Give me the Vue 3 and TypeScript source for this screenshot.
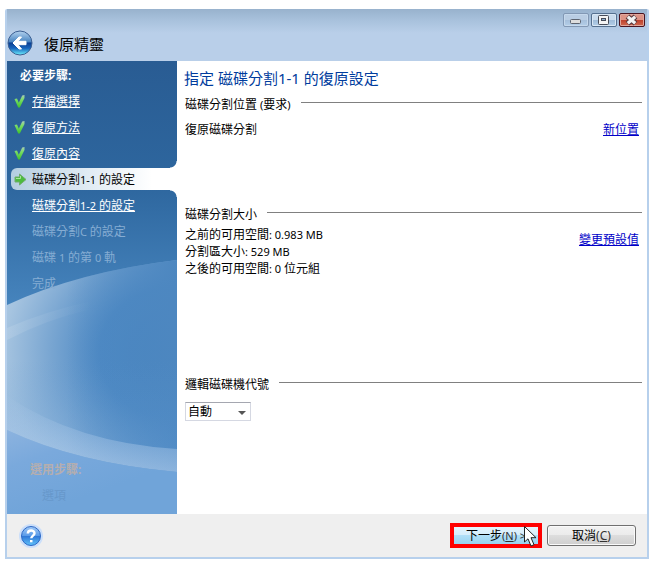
<script setup lang="ts">
import { ref } from 'vue'

type StepState = 'done' | 'active' | 'open' | 'pending'
interface Part { text: string; latin?: boolean }
interface Step { label: string; state: StepState }

const steps: Step[] = [
  { label: '存檔選擇', state: 'done' },
  { label: '復原方法', state: 'done' },
  { label: '復原內容', state: 'done' },
  { label: '磁碟分割1-1 的設定', state: 'active' },
  { label: '磁碟分割1-2 的設定', state: 'open' },
  { label: '磁碟分割C 的設定', state: 'pending' },
  { label: '磁碟 1 的第 0 軌', state: 'pending' },
  { label: '完成', state: 'pending' },
]
const sizes = ['之前的可用空間: 0.983 MB', '分割區大小: 529 MB', '之後的可用空間: 0 位元組']
const letter = ref('自動')

const isLink = (state: StepState) => state === 'done' || state === 'open'

/* Splits a label into CJK and Latin runs so each gets its own type size. */
function parts(label: string): Part[] {
  return (label.match(/[\x20-\x7e]+|[^\x20-\x7e]+/g) ?? []).map((text) => ({
    text,
    latin: /^[\x20-\x7e]/.test(text),
  }))
}
</script>

<template>
  <div class="desktop">
    <div class="window">
      <header class="header">
        <div class="brand">
          <button class="back" type="button" aria-label="返回">
            <svg viewBox="0 0 26 26" width="26" height="26">
              <defs>
                <linearGradient id="backFill" x1="0" y1="0" x2="0" y2="1">
                  <stop offset="0" stop-color="#b4d2ee" />
                  <stop offset=".45" stop-color="#4a86c2" />
                  <stop offset=".5" stop-color="#0b3f92" />
                  <stop offset=".72" stop-color="#1766bd" />
                  <stop offset="1" stop-color="#6ff2ff" />
                </linearGradient>
              </defs>
              <circle cx="13" cy="13" r="12" fill="url(#backFill)" stroke="#3c5f92" />
              <path d="M6 13 L12 7 H14.500 L11 11.300 H19 V14.700 H11 L14.500 19 H12 Z" fill="#fff" stroke="#fff" stroke-linejoin="round" />
            </svg>
          </button>
          <h1>復原精靈</h1>
        </div>
        <div class="controls">
          <button class="control dim" type="button" aria-label="最小化">
            <svg viewBox="0 0 24 12" width="24" height="12"><rect x="6.500" y="5.500" width="10" height="4" rx="1" fill="#ddd" stroke="#5d6470" /></svg>
          </button>
          <button class="control" type="button" aria-label="最大化">
            <svg viewBox="0 0 24 12" width="24" height="12">
              <rect x="6.500" y="1.500" width="10" height="9" rx="1" fill="#f4f4f4" stroke="#474c58" />
              <rect x="9.500" y="4.500" width="4" height="2" fill="#8fb0d2" stroke="#474c58" />
            </svg>
          </button>
          <button class="control close" type="button" aria-label="關閉">
            <svg viewBox="0 0 24 12" width="24" height="12">
              <path d="M7.500 2.500 L15.500 9.500 M15.500 2.500 L7.500 9.500" stroke="#54383d" stroke-width="5.500" />
              <path d="M7.800 2.800 L15.200 9.200 M15.200 2.800 L7.800 9.200" stroke="#f3f3f3" stroke-width="3.200" />
            </svg>
          </button>
        </div>
      </header>

      <div class="body">
        <nav class="sidebar">
          <svg class="art" viewBox="0 0 170 453" preserveAspectRatio="none" aria-hidden="true">
            <defs>
              <linearGradient id="base" x1="0" y1="0" x2="0" y2="1">
                <stop offset="0" stop-color="#295c93" />
                <stop offset=".28" stop-color="#2e679f" />
                <stop offset=".54" stop-color="#4684bd" />
              </linearGradient>
              <radialGradient id="wave" gradientUnits="userSpaceOnUse" cx="0" cy="0" r="1" gradientTransform="translate(168 292) scale(190 165)">
                <stop offset="0" stop-color="#4583bf" />
                <stop offset=".4" stop-color="#4d89c4" />
                <stop offset=".65" stop-color="#78a5d1" />
                <stop offset=".9" stop-color="#a6c4e0" />
                <stop offset="1" stop-color="#b0cae4" />
              </radialGradient>
              <linearGradient id="shade" x1="0" y1="0" x2="1" y2="0">
                <stop offset=".35" stop-color="#4d87c0" stop-opacity="0" />
                <stop offset="1" stop-color="#4d87c0" />
              </linearGradient>
              <linearGradient id="glow" x1="0" y1="0" x2="0" y2="1">
                <stop offset="0" stop-color="#5590cb" stop-opacity="0" />
                <stop offset="1" stop-color="#5f9ad5" stop-opacity=".6" />
              </linearGradient>
              <linearGradient id="band" x1=".5" y1="0" x2=".38" y2="1">
                <stop offset="0" stop-color="#b9d2ee" stop-opacity="0" />
                <stop offset="1" stop-color="#b9d2ee" stop-opacity=".6" />
              </linearGradient>
              <linearGradient id="ray" x1="0" y1="0" x2="1" y2="0">
                <stop offset="0" stop-color="#fff" stop-opacity=".12" />
                <stop offset="1" stop-color="#fff" stop-opacity="0" />
              </linearGradient>
              <linearGradient id="floor" gradientUnits="userSpaceOnUse" x1="0" y1="369" x2="30" y2="453">
                <stop offset="0" stop-color="#8cb3df" />
                <stop offset=".4" stop-color="#7aa9dc" />
                <stop offset="1" stop-color="#70a4d9" />
              </linearGradient>
            </defs>
            <rect width="170" height="453" fill="url(#base)" />
            <path d="M0 244 Q70 211 170 199 V453 H0 Z" fill="url(#wave)" />
            <path d="M0 244 Q70 211 170 199 V411 Q70 402 0 369 Z" fill="url(#shade)" />
            <path d="M0 267 Q36 251 85 240 V248 Q40 258 0 279 Z" fill="url(#ray)" />
            <rect y="300" width="170" height="153" fill="url(#glow)" />
            <path d="M0 335 Q70 382 170 388 V411 Q70 402 0 369 Z" fill="url(#band)" />
            <path d="M0 369 Q70 402 170 411 V453 H0 Z" fill="url(#floor)" />
          </svg>
          <h2>必要步驟:</h2>
          <ol class="steps">
            <li v-for="step in steps" :key="step.label" :class="step.state">
              <span class="mark">
                <svg v-if="step.state === 'done'" viewBox="0 0 11 13" width="11" height="13">
                  <path d="M0.5 4 L3 3.500 L4.800 7.800 L8.200 .5 L10.500 0 V3 L5.800 12.500 H4.200 Z" fill="url(#tick)" />
                  <defs>
                    <linearGradient id="tick" x1="0" y1="0" x2="0" y2="1">
                      <stop offset="0" stop-color="#a9cbb8" />
                      <stop offset=".4" stop-color="#77dd62" />
                      <stop offset="1" stop-color="#3fc22d" />
                    </linearGradient>
                  </defs>
                </svg>
                <svg v-if="step.state === 'active'" viewBox="0 0 13 13" width="13" height="13">
                  <path d="M1 4 H5.500 V1 L12 6.500 L5.500 12 V9 H1 Z" fill="#4dbb3e" stroke="#70ad6d" stroke-linejoin="round" />
                  <path d="M2 5.500 H6.500 V3" fill="none" stroke="#a8e898" />
                </svg>
              </span>
              <component :is="isLink(step.state) ? 'a' : 'span'" class="label" :href="isLink(step.state) ? '#' : undefined"><span v-for="(part, i) in parts(step.label)" :key="i" :class="{ latin: part.latin }">{{ part.text }}</span></component>
            </li>
          </ol>
          <div class="optional">
            <h2>選用步驟:</h2>
            <span>選項</span>
          </div>
        </nav>

        <main class="main">
          <h2 class="title">指定 磁碟分割<span class="latin">1-1 </span>的復原設定</h2>
          <section>
            <h3><span>磁碟分割位置<span class="latin"> (</span>要求<span class="latin">)</span></span></h3>
            <div class="row">
              <span>復原磁碟分割</span>
              <a href="#">新位置</a>
            </div>
          </section>
          <section class="size">
            <h3><span>磁碟分割大小</span></h3>
            <div class="row">
              <ul>
                <li v-for="line in sizes" :key="line"><span v-for="(part, i) in parts(line)" :key="i" :class="{ latin: part.latin }">{{ part.text }}</span></li>
              </ul>
              <a href="#">變更預設值</a>
            </div>
          </section>
          <section>
            <h3><label for="letter">邏輯磁碟機代號</label></h3>
            <div class="picker">
              <select id="letter" v-model="letter">
                <option>自動</option>
              </select>
              <svg viewBox="0 0 8 4" width="8" height="4" aria-hidden="true"><path d="M0 0 H8 L4 4 Z" fill="#555" /></svg>
            </div>
          </section>
        </main>
      </div>

      <footer class="footer">
        <button class="help" type="button" aria-label="說明">
          <svg viewBox="0 0 24 24" width="24" height="24">
            <defs>
              <linearGradient id="helpFill" x1="0" y1="0" x2="0" y2="1">
                <stop offset="0" stop-color="#a5ccf7" />
                <stop offset=".5" stop-color="#5799e8" />
                <stop offset=".52" stop-color="#3079d8" />
                <stop offset="1" stop-color="#60c3fa" />
              </linearGradient>
            </defs>
            <circle cx="12" cy="12" r="12" fill="#cbdffa" />
            <circle cx="12" cy="12" r="9.500" fill="url(#helpFill)" stroke="#2d69c7" />
            <path d="M8.800 9.500 C8.800 5.500 15.500 5.500 15.500 9.300 C15.500 11.600 12.300 11.600 12.300 14.300" fill="none" stroke="#fff" stroke-width="2.400" />
            <rect x="11" y="16" width="2.500" height="2.300" fill="#fff" />
          </svg>
        </button>
        <div class="actions">
          <div class="focus">
            <button class="forward" type="button">下一步<span class="key">(<u>N</u>) &gt;</span></button>
            <svg class="cursor" viewBox="0 0 13 21" width="13" height="21" aria-hidden="true">
              <path d="M.5 .5 V16 L4 12.800 L7 20 L10 18.700 L7 11.700 H12 Z" fill="#fff" stroke="#222" />
            </svg>
          </div>
          <button class="cancel" type="button">取消<span class="key">(<u>C</u>)</span></button>
        </div>
      </footer>
    </div>
  </div>
</template>

<style>
body {
  margin: 0;
  background: #fff;
}
</style>

<style scoped>
* {
  box-sizing: border-box;
}
.desktop {
  display: flex;
  min-height: 100vh;
  padding: 9px 12px 7px 5px;
  font-family: "Noto Sans", "Noto Sans CJK TC", sans-serif;
  font-size: 12px;
  line-height: 18px;
  color: #000;
}
h1, h2, h3, ul, ol {
  margin: 0;
  padding: 0;
  list-style: none;
  font-size: inherit;
  font-weight: normal;
}
button {
  font: inherit;
  color: inherit;
  padding: 0;
}
.latin {
  font-size: 11px;
  white-space: pre;
}
.window {
  flex: 1;
  display: flex;
  flex-direction: column;
  border: 2px solid #b7d0ec;
  border-top: 0;
  border-radius: 2px 2px 0 0;
  background: #fff;
  overflow: hidden;
}
.header {
  display: flex;
  justify-content: space-between;
  align-items: flex-start;
  height: 52px;
  padding: 4px 2px 0 0;
  background: linear-gradient(#98b2cd, #a9c2dd 12px, #b9cfe9 24px);
}
.brand {
  display: flex;
  align-items: center;
  gap: 11px;
  padding-top: 17px;
}
h1 {
  padding-top: 2px;
  font-size: 15px;
  line-height: 24px;
}
.back, .help {
  display: flex;
  border: 0;
  background: none;
}
.controls {
  display: flex;
  gap: 2px;
}
.control {
  display: flex;
  width: 26px;
  height: 14px;
  border: 1px solid #55708f;
  border-radius: 2px;
  box-shadow: inset 0 0 0 1px #d9e7f5;
  background: linear-gradient(#c9dbed 50%, #9fbbd8 50%, #b4cfe9);
}
.control.dim {
  border-color: #8298b4;
  box-shadow: inset 0 0 0 1px #c5d8ec;
  background: linear-gradient(#b9cde3 50%, #a6bfdb 50%, #b4cfe9);
}
.control.close {
  border-color: #4a1420;
  box-shadow: inset 0 0 0 1px #e0a79d;
  background: linear-gradient(#dc9386 50%, #bd3f2b 50%, #d06a50);
}
.body {
  flex: 1;
  display: grid;
  grid-template-columns: 170px 1fr;
}
.sidebar {
  position: relative;
  display: flex;
  flex-direction: column;
  padding-top: 6px;
  color: #fff;
}
.art {
  position: absolute;
  inset: 0;
  width: 100%;
  height: 100%;
}
.sidebar h2 {
  position: relative;
  padding-left: 13px;
  font-weight: bold;
}
.steps {
  position: relative;
  padding: 5px 0 0 4px;
}
.steps li {
  position: relative;
  display: flex;
  align-items: center;
  height: 22px;
  margin-bottom: 4px;
}
.mark {
  display: flex;
  width: 21px;
  padding-left: 3px;
}
.label {
  padding-top: 2px;
}
.steps a {
  color: #fff;
}
.steps .pending {
  color: #86add3;
}
.steps .active {
  color: #000;
  border-radius: 6px 0 0 6px;
  background: linear-gradient(90deg, #b4cde0, #dfeaf3 45%, #fff 85%);
}
.active::before, .active::after {
  content: "";
  position: absolute;
  right: 0;
  width: 7px;
  height: 7px;
}
.active::before {
  bottom: 100%;
  background: radial-gradient(circle at 0 0, transparent 6px, #fff 7px);
}
.active::after {
  top: 100%;
  background: radial-gradient(circle at 0 100%, transparent 6px, #fff 7px);
}
.optional {
  position: relative;
  display: flex;
  flex-direction: column;
  gap: 8px;
  margin-top: auto;
  padding: 0 0 9px 10px;
  color: #b5aeaf;
}
.optional span {
  padding-left: 25px;
  color: #6798cb;
}
.main {
  display: grid;
  grid-template-rows: 35px 110px 170px auto;
  align-content: start;
  padding: 0 5px 0 7px;
}
.title {
  padding-top: 8px;
  font-size: 15px;
  color: #003c9d;
}
section {
  padding-left: 1px;
}
h3 {
  display: flex;
  align-items: center;
  gap: 10px;
}
h3::after {
  content: "";
  flex: 1;
  height: 1px;
  margin-bottom: 5px;
  background: #808080;
}
.title .latin {
  font-size: 15px;
}
.row {
  display: flex;
  justify-content: space-between;
  align-items: flex-start;
  padding: 7px 3px 0 0;
}
.size .row {
  padding-top: 2px;
}
.size li {
  line-height: 17px;
}
.size a {
  padding-top: 5px;
}
.main a {
  color: #0000c8;
}
.picker {
  position: relative;
  width: 66px;
  margin-top: 8px;
}
.picker select {
  display: block;
  width: 100%;
  height: 19px;
  padding: 0 2px;
  appearance: none;
  border: 1px solid #d5d8e2;
  border-top-color: #a5a7b0;
  border-radius: 0;
  background: #fff;
  color: #000;
  font: inherit;
}
.picker svg {
  position: absolute;
  right: 5px;
  top: 9px;
  pointer-events: none;
}
.footer {
  display: flex;
  justify-content: space-between;
  align-items: center;
  height: 43px;
  padding: 0 11px 0 12px;
  background: #efefef;
}
.actions {
  display: flex;
  align-items: center;
  gap: 5px;
}
.focus {
  position: relative;
  border: 4px solid #f00;
}
.actions button {
  display: block;
  white-space: nowrap;
}
.forward {
  width: 84px;
  height: 17px;
  border: 0;
  line-height: 17px;
  background: linear-gradient(#e5f4fc, #d4edfb 50%, #b0dff7 50%, #98d2f0);
}
.cancel {
  width: 89px;
  height: 21px;
  border: 1px solid #707070;
  border-radius: 3px;
  box-shadow: inset 0 0 0 1px #fafafa;
  line-height: 19px;
  background: linear-gradient(#f2f2f2, #ebebeb 50%, #dddddd 50%, #cfcfcf);
}
.key {
  color: #333;
}
.forward .key {
  font-size: 11px;
}
.cursor {
  position: absolute;
  left: 70px;
  top: -1px;
}
</style>
